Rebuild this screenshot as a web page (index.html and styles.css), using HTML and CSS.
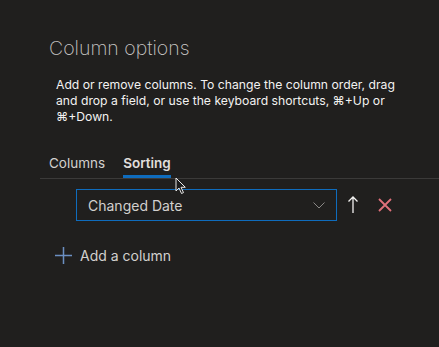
FILE: index.html
```html
<!DOCTYPE html>
<html lang="en">
<head>
    <meta charset="UTF-8">
    <title>Column options</title>
    <link rel="stylesheet" href="styles.css">
</head>
<body>
    <div class="panel">
        <h1 class="title">Column options</h1>
        <p class="desc">Add or remove columns. To change the column order, drag and drop a field, or use the keyboard shortcuts, ⌘+Up or ⌘+Down.</p>
        <div class="tabs">
            <button class="tab">Columns</button>
            <button class="tab active">Sorting</button>
        </div>
        <div class="sort-row">
            <div class="dropdown">
                <span>Changed Date</span>
                <svg class="chevron" width="12" height="7" viewBox="0 0 12 7"><path d="M0.5 0.5 L6 6 L11.5 0.5" fill="none" stroke="#8a8886" stroke-width="1"/></svg>
            </div>
            <button class="icon-btn">
                <svg width="12" height="18" viewBox="0 0 12 18"><path d="M6 1 V17 M1.5 5.5 L6 1 L10.5 5.5" fill="none" stroke="#f3f2f1" stroke-width="1.3"/></svg>
            </button>
            <button class="icon-btn">
                <svg width="14" height="14" viewBox="0 0 14 14"><path d="M1 1 L13 13 M13 1 L1 13" fill="none" stroke="#e0707a" stroke-width="1.8"/></svg>
            </button>
        </div>
        <button class="add">
            <svg width="17" height="17" viewBox="0 0 17 17"><path d="M8.5 0 V17 M0 8.5 H17" fill="none" stroke="#6b8fc2" stroke-width="1.5"/></svg>
            <span>Add a column</span>
        </button>
        <svg class="cursor" width="12" height="18" viewBox="0 0 12 18"><path d="M1 1 L1 14 L4 11 L6.5 16.5 L8.5 15.6 L6 10.3 L10.3 10.3 Z" fill="#1a1a1a" stroke="#e8e8e8" stroke-width="1"/></svg>
    </div>
</body>
</html>
```
FILE: styles.css
```css
html, body {
    margin: 0;
    background-color: #201f1e;
}
body {
    font-family: Inter, "Noto Sans", sans-serif;
    color: #e1dfdd;
    width: 439px;
    height: 347px;
    overflow: hidden;
}
.panel {
    position: relative;
    padding-top: 35px;
}
.title {
    margin: 0 0 0 49px;
    font-size: 19.5px;
    font-weight: 200;
    line-height: 26px;
    color: #c8c6c4;
}
.desc {
    margin: 16px 0 0 56px;
    width: 342px;
    font-size: 12.2px;
    line-height: 16px;
    color: #f3f2f1;
}
.tabs {
    display: flex;
    gap: 18px;
    margin: 29px 0 0 40px;
    padding-left: 9px;
    border-bottom: 1px solid #3b3a39;
}
.tab {
    background: none;
    border: none;
    padding: 0 0 3px;
    font-family: inherit;
    font-size: 13.5px;
    line-height: 18px;
    color: #d2d0ce;
    border-bottom: 3px solid transparent;
}
.tab.active {
    font-weight: 600;
    color: #e1dfdd;
    border-bottom-color: #0f6cbd;
}
.sort-row {
    display: flex;
    align-items: center;
    margin: 10px 0 0 76px;
}
.dropdown {
    display: flex;
    align-items: center;
    justify-content: space-between;
    box-sizing: border-box;
    width: 261px;
    height: 32px;
    padding: 0 11px 0 11px;
    border: 1px solid #0f6cbd;
    font-size: 14px;
    color: #d2d0ce;
}
.icon-btn {
    display: flex;
    align-items: center;
    justify-content: center;
    width: 32px;
    height: 32px;
    padding: 0;
    background: none;
    border: none;
}
.add {
    display: flex;
    align-items: center;
    gap: 8px;
    margin: 26px 0 0 55px;
    padding: 0;
    background: none;
    border: none;
    font-family: inherit;
    font-size: 14px;
    color: #d2d0ce;
}
.cursor {
    position: absolute;
    left: 175px;
    top: 177px;
}
```
